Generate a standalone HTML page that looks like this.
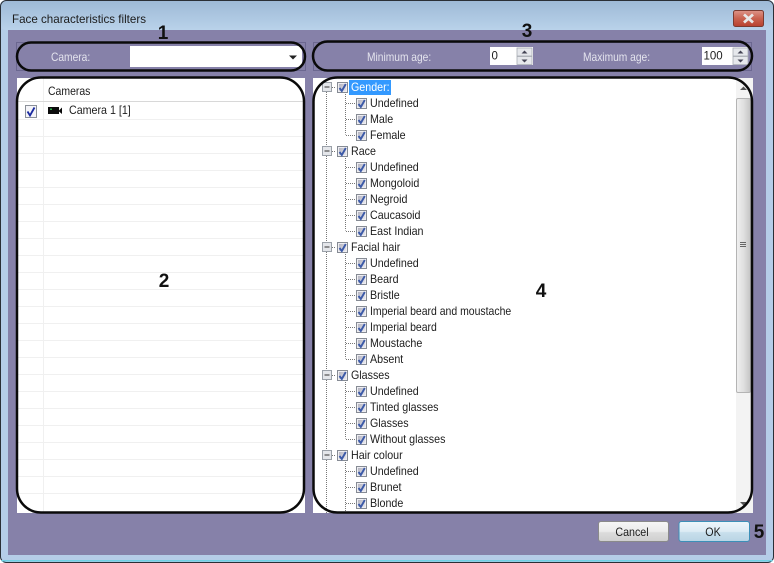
<!DOCTYPE html>
<html><head><meta charset="utf-8"><style>
html,body{margin:0;padding:0;width:774px;height:563px;overflow:hidden;background:#fff}
svg{display:block}
text{font-family:"Liberation Sans",sans-serif;font-size:11.5px;fill:#1c1c1c;transform-box:fill-box;transform-origin:0 50%;transform:scaleX(.93)}
.t{transform:none;font-size:11.6px}
.s{transform:none}
.w{transform:scaleX(.91)}
.l{fill:#e4e4ee;transform:scaleX(.89)}
.m{transform-origin:50% 50%;text-anchor:middle}
.n{font-size:19px;font-weight:bold;fill:#111;text-anchor:middle;transform:none}
.d{stroke:#777;stroke-width:1;stroke-dasharray:1 1;fill:none}
.g{stroke:#f0f0f0;stroke-width:1}
</style></head><body>
<svg width="774" height="563" viewBox="0 0 774 563" xmlns="http://www.w3.org/2000/svg">
<defs>
<linearGradient id="tb" x1="0" y1="0" x2="0" y2="1"><stop offset="0" stop-color="#9db9d6"/><stop offset="1" stop-color="#b9d2ea"/></linearGradient>
<linearGradient id="cl" x1="0" y1="0" x2="0" y2="1"><stop offset="0" stop-color="#dd9488"/><stop offset=".5" stop-color="#c9624f"/><stop offset="1" stop-color="#b8402e"/></linearGradient>
<linearGradient id="bt" x1="0" y1="0" x2="0" y2="1"><stop offset="0" stop-color="#f6f6f6"/><stop offset=".5" stop-color="#ebebeb"/><stop offset=".55" stop-color="#dcdcdc"/><stop offset="1" stop-color="#cfcfcf"/></linearGradient>
<linearGradient id="ok" x1="0" y1="0" x2="0" y2="1"><stop offset="0" stop-color="#eef6fb"/><stop offset=".5" stop-color="#dcebf4"/><stop offset=".55" stop-color="#c8dfec"/><stop offset="1" stop-color="#b9d4e4"/></linearGradient>
<linearGradient id="sc" x1="0" y1="0" x2="1" y2="0"><stop offset="0" stop-color="#f0f0f0"/><stop offset=".5" stop-color="#e0e0e0"/><stop offset="1" stop-color="#c4c4c4"/></linearGradient>
<linearGradient id="cb" x1="0" y1="0" x2="1" y2="1"><stop offset="0" stop-color="#b4b4c0"/><stop offset="1" stop-color="#e8e8ee"/></linearGradient>
<symbol id="c" width="13" height="13" viewBox="0 0 13 13" overflow="visible">
<rect x="1.500" y="1.500" width="10" height="10" fill="#eeeef2" stroke="#868b94"/>
<rect x="3" y="3" width="7" height="7" fill="url(#cb)"/>
<path d="M3.500 7 L5.800 10 L9.800 3" fill="none" stroke="#3c5aa8" stroke-width="1.900"/>
</symbol>
<symbol id="e" width="10" height="10" viewBox="0 0 10 10" overflow="visible">
<rect x=".5" y=".5" width="9" height="9" fill="#e4e6ea" stroke="#9aa0a8"/>
<path d="M2.5 5H7.5" stroke="#333" stroke-width="1"/>
</symbol>
</defs>

<!-- window frame -->
<rect x="0" y="0" width="774" height="563" rx="6" fill="#b5cde8"/>
<rect x="0" y="0" width="774" height="30" rx="6" fill="url(#tb)"/>
<rect x=".5" y=".5" width="773" height="562" rx="6" fill="none" stroke="#2a2f36"/>
<rect x="1.5" y="560" width="771" height="1.5" fill="#6fd0e4"/>
<rect x="8" y="30" width="758" height="525" fill="#8681a9"/>
<text class="t" x="12" y="23">Face characteristics filters</text>

<!-- close -->
<rect x="733.5" y="10.5" width="30" height="16" rx="2" fill="url(#cl)" stroke="#7a3a30"/>
<path d="M744 14.5 L753 22.5 M753 14.5 L744 22.5" stroke="#e8e8e8" stroke-width="2.8"/>

<!-- camera bar -->
<rect x="16.5" y="42.5" width="289" height="28" fill="none" stroke="#6b6790"/>
<text class="l" x="51" y="61">Camera:</text>
<rect x="130" y="46" width="172" height="21" fill="#fff"/>
<path d="M289 55.5h8l-4 4z" fill="#222"/>

<!-- age bar -->
<rect x="313.5" y="42.5" width="438" height="28" fill="none" stroke="#6b6790"/>
<text class="l" x="367" y="61">Minimum age:</text>
<rect x="490" y="47" width="43" height="18" fill="#fff"/>
<text class="s" x="491.5" y="59.5">0</text>
<rect x="517" y="48" width="15" height="8" fill="#e6e8ec" stroke="#a8acb4" stroke-width=".8"/>
<rect x="517" y="56.5" width="15" height="8" fill="#e6e8ec" stroke="#a8acb4" stroke-width=".8"/>
<path d="M521.5 53.5h6l-3-3z M521.5 59.5h6l-3 3z" fill="#445"/>
<text class="l" x="583" y="61">Maximum age:</text>
<rect x="702" y="47" width="46" height="18" fill="#fff"/>
<text class="s" x="703.5" y="59.5">100</text>
<rect x="733" y="48" width="15" height="8" fill="#e6e8ec" stroke="#a8acb4" stroke-width=".8"/>
<rect x="733" y="56.5" width="15" height="8" fill="#e6e8ec" stroke="#a8acb4" stroke-width=".8"/>
<path d="M737.5 53.5h6l-3-3z M737.5 59.5h6l-3 3z" fill="#445"/>

<!-- camera grid -->
<rect x="17" y="78" width="288" height="435" fill="#fff"/>
<path class="g" d="M43.5 78V513"/>
<path stroke="#d8d8d8" d="M17 101.5H305"/>
<path class="g" d="M17 119.5H305M17 136.5H305M17 153.5H305M17 170.5H305M17 187.5H305M17 204.5H305M17 221.5H305M17 238.5H305M17 255.5H305M17 272.5H305M17 289.5H305M17 306.5H305M17 323.5H305M17 340.5H305M17 357.5H305M17 374.5H305M17 391.5H305M17 408.5H305M17 425.5H305M17 442.5H305M17 459.5H305M17 476.5H305M17 493.5H305"/>
<text class="w" x="48" y="95">Cameras</text>
<rect x="25.500" y="105.500" width="11" height="12" fill="#f4f4f8" stroke="#8a8f98"/>
<path d="M27.500 111.500 L30 115.500 L34.500 107.500" fill="none" stroke="#1a2aa0" stroke-width="1.800"/>
<rect x="48" y="107" width="11" height="7" fill="#0b0b0b"/>
<rect x="50" y="108.500" width="2" height="1.500" fill="#2fae4a"/>
<path d="M59 110.500 L62 107.500V114L59 111.500z" fill="#0b0b0b"/>
<text x="69" y="114">Camera 1 [1]</text>

<!-- tree -->
<rect x="313" y="78" width="440" height="435" fill="#fff"/>
<path class="d" d="M326.500 92V513"/>
<path class="d" d="M345.500 92V134.500M345.500 156V230.500M345.500 252V358.500M345.500 380V438.500M345.500 460V513"/>
<path class="d" d="M332 87.500H336M332 151.500H336M332 247.500H336M332 375.500H336M332 455.500H336"/>
<path class="d" d="M346 103.500H355M346 119.500H355M346 135.500H355M346 167.500H355M346 183.500H355M346 199.500H355M346 215.500H355M346 231.500H355M346 263.500H355M346 279.500H355M346 295.500H355M346 311.500H355M346 327.500H355M346 343.500H355M346 359.500H355M346 391.500H355M346 407.500H355M346 423.500H355M346 439.500H355M346 471.500H355M346 487.500H355M346 503.500H355"/>

<use href="#e" x="322" y="82"/><use href="#e" x="322" y="146"/><use href="#e" x="322" y="242"/><use href="#e" x="322" y="370"/><use href="#e" x="322" y="450"/>

<use href="#c" x="336" y="81"/><use href="#c" x="336" y="145"/><use href="#c" x="336" y="241"/><use href="#c" x="336" y="369"/><use href="#c" x="336" y="449"/>

<use href="#c" x="355" y="97"/><use href="#c" x="355" y="113"/><use href="#c" x="355" y="129"/>
<use href="#c" x="355" y="161"/><use href="#c" x="355" y="177"/><use href="#c" x="355" y="193"/><use href="#c" x="355" y="209"/><use href="#c" x="355" y="225"/>
<use href="#c" x="355" y="257"/><use href="#c" x="355" y="273"/><use href="#c" x="355" y="289"/><use href="#c" x="355" y="305"/><use href="#c" x="355" y="321"/><use href="#c" x="355" y="337"/><use href="#c" x="355" y="353"/>
<use href="#c" x="355" y="385"/><use href="#c" x="355" y="401"/><use href="#c" x="355" y="417"/><use href="#c" x="355" y="433"/>
<use href="#c" x="355" y="465"/><use href="#c" x="355" y="481"/><use href="#c" x="355" y="497"/>

<rect x="349" y="80" width="42" height="15" fill="#3399ff"/>
<text x="351" y="91" style="fill:#fff">Gender:</text>
<text x="370" y="107">Undefined</text>
<text x="370" y="123">Male</text>
<text x="370" y="139">Female</text>
<text x="351" y="155">Race</text>
<text x="370" y="171">Undefined</text>
<text x="370" y="187">Mongoloid</text>
<text x="370" y="203">Negroid</text>
<text x="370" y="219">Caucasoid</text>
<text x="370" y="235">East Indian</text>
<text x="351" y="251">Facial hair</text>
<text x="370" y="267">Undefined</text>
<text x="370" y="283">Beard</text>
<text x="370" y="299">Bristle</text>
<text class="w" x="370" y="315">Imperial beard and moustache</text>
<text class="w" x="370" y="331">Imperial beard</text>
<text x="370" y="347">Moustache</text>
<text x="370" y="363">Absent</text>
<text x="351" y="379">Glasses</text>
<text x="370" y="395">Undefined</text>
<text x="370" y="411">Tinted glasses</text>
<text x="370" y="427">Glasses</text>
<text x="370" y="443">Without glasses</text>
<text x="351" y="459">Hair colour</text>
<text x="370" y="475">Undefined</text>
<text x="370" y="491">Brunet</text>
<text x="370" y="507">Blonde</text>

<!-- scrollbar -->
<rect x="736" y="78" width="17" height="435" fill="#f3f3f3"/>
<rect x="736.500" y="98.500" width="14" height="294" rx="1.500" fill="url(#sc)" stroke="#b4b4b4"/>
<path d="M740 246.500h6M740 244.500h6M740 242.500h6" stroke="#666" stroke-width="1"/>
<path d="M740 90h7l-3.500-3.500z M740 502h7l-3.500 3.500z" fill="#555"/>

<!-- highlight outlines -->
<rect x="17" y="42.500" width="288" height="28" rx="14" fill="none" stroke="#0a0a0a" stroke-width="2.500"/>
<rect x="313" y="41.500" width="439" height="29" rx="14.500" fill="none" stroke="#0a0a0a" stroke-width="2.500"/>
<rect x="17" y="77.500" width="287" height="435" rx="24" fill="none" stroke="#0a0a0a" stroke-width="2.500"/>
<rect x="313.500" y="77.500" width="438.500" height="435" rx="24" fill="none" stroke="#0a0a0a" stroke-width="2.500"/>

<!-- buttons -->
<rect x="598.500" y="521.500" width="70" height="20" rx="2.500" fill="url(#bt)" stroke="#8a8a8a"/>
<text class="m" x="632" y="536">Cancel</text>
<rect x="679" y="521.500" width="70.500" height="20" rx="2.500" fill="url(#ok)" stroke="#3c8fb8"/>
<text class="m" x="713" y="536">OK</text>

<!-- numbers -->
<text class="n" x="163" y="39">1</text>
<text class="n" x="164" y="287">2</text>
<text class="n" x="527" y="37">3</text>
<text class="n" x="541" y="297">4</text>
<text class="n" x="759" y="538">5</text>
</svg>
</body></html>
